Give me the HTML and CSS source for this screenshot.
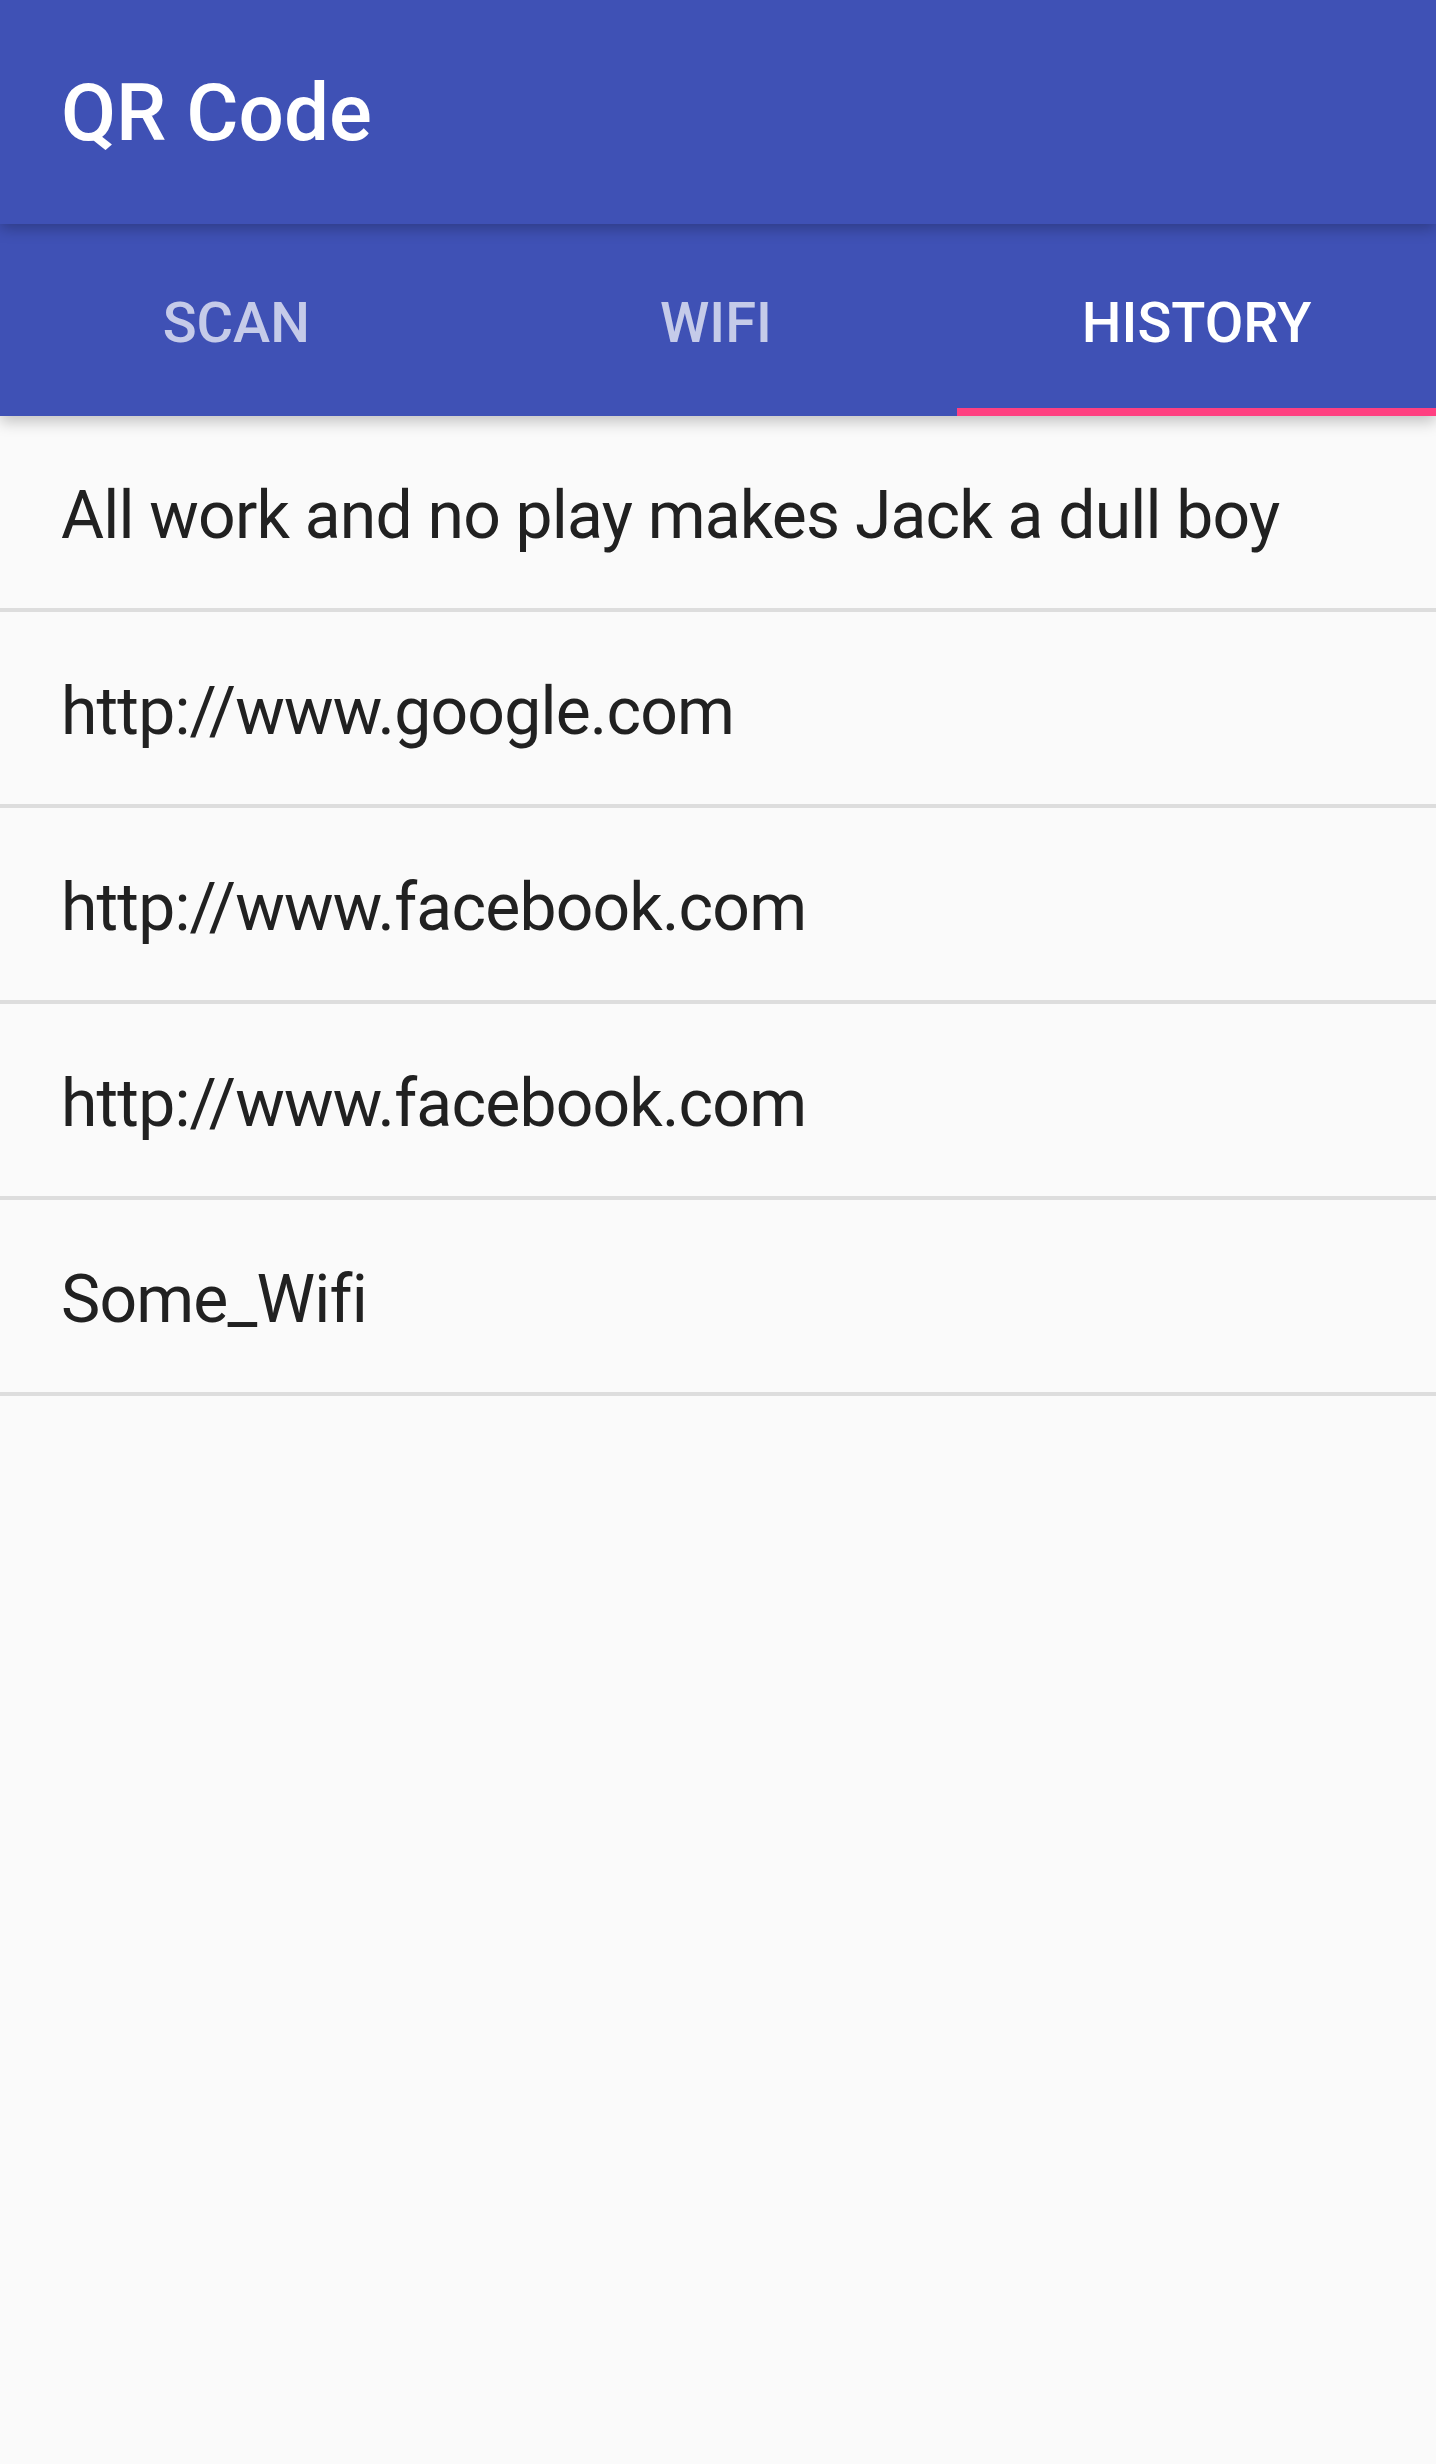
FILE: index.html
```html
<!DOCTYPE html>
<html>
<head>
<meta charset="utf-8">
<link rel="stylesheet" href="styles.css">
</head>
<body>
<header class="appbar">
  <h1 class="title">QR Code</h1>
</header>
<nav class="tabs">
  <div class="tab">SCAN</div>
  <div class="tab">WIFI</div>
  <div class="tab active">HISTORY</div>
</nav>
<ul class="history">
  <li class="item">All work and no play makes Jack a dull boy</li>
  <li class="item">http://www.google.com</li>
  <li class="item">http://www.facebook.com</li>
  <li class="item">http://www.facebook.com</li>
  <li class="item">Some_Wifi</li>
</ul>
</body>
</html>
```
FILE: styles.css
```css
html, body {
  margin: 0;
  padding: 0;
}
body {
  background: #fafafa;
  font-family: Roboto, "Noto Sans", sans-serif;
  width: 1436px;
  min-height: 2464px;
}
.appbar {
  position: relative;
  z-index: 2;
  height: 224px;
  background: #3f51b5;
  display: flex;
  align-items: center;
  padding: 0 61px;
  box-shadow: 0 4px 14px rgba(0, 0, 0, 0.28);
}
.title {
  margin: 0;
  color: #ffffff;
  font-size: 80px;
  font-weight: 500;
  line-height: 1;
  margin-top: 2px;
}
.tabs {
  position: relative;
  z-index: 1;
  height: 192px;
  background: #3f51b5;
  display: grid;
  grid-template-columns: repeat(3, 1fr);
  box-shadow: 0 6px 14px rgba(0, 0, 0, 0.22);
}
.tab {
  display: flex;
  align-items: center;
  justify-content: center;
  color: rgba(255, 255, 255, 0.7);
  font-size: 56px;
  font-weight: 500;
  box-sizing: border-box;
  border-bottom: 8px solid transparent;
  padding-top: 14px;
}
.tab:first-child {
  padding-right: 6px;
}
.tab:nth-child(2) {
  padding-right: 4px;
}
.tab.active {
  color: #ffffff;
  border-bottom-color: #ff4081;
}
.history {
  list-style: none;
  margin: 0;
  padding: 0;
}
.item {
  display: flex;
  align-items: center;
  padding: 6px 61px 0;
  box-sizing: content-box;
  height: 186px;
  border-bottom: 4px solid #dddddd;
  font-size: 66px;
  letter-spacing: -0.8px;
  color: #212121;
}
```
